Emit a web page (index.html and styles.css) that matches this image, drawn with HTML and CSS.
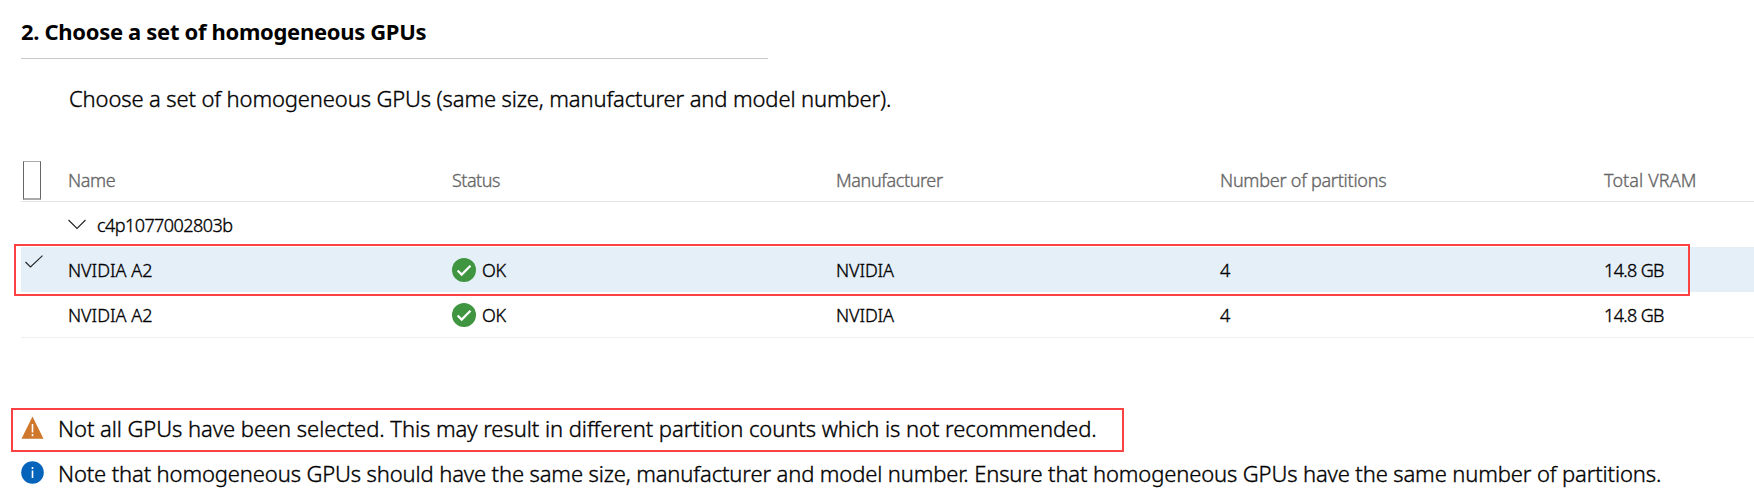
FILE: index.html
```html
<!DOCTYPE html>
<html lang="en">
<head>
<meta charset="utf-8">
<title>Choose GPUs</title>
<link rel="stylesheet" href="styles.css">
</head>
<body>
<main class="step">
  <h2 class="step-title"><span class="t-title">2. Choose a set of homogeneous GPUs</span></h2>
  <p class="intro"><span class="t-intro">Choose a set of homogeneous GPUs (same size, manufacturer and model number).</span></p>

  <section class="grid">
    <div class="row head">
      <div class="select"><span class="checkbox"></span></div>
      <div class="cell"><span class="t-name">Name</span></div>
      <div class="cell"><span class="t-status">Status</span></div>
      <div class="cell"><span class="t-manu">Manufacturer</span></div>
      <div class="cell"><span class="t-num">Number of partitions</span></div>
      <div class="cell"><span class="t-vram">Total VRAM</span></div>
    </div>
    <div class="row group">
      <svg class="chevron" viewBox="0 0 18 11" width="18" height="11"><path d="M.5 1 9 9.5 17.5 1" fill="none" stroke="#222" stroke-width="1.1"/></svg>
      <span class="t-host">c4p1077002803b</span>
    </div>
    <div class="row selected">
      <div class="select"><svg class="tick" viewBox="0 0 18 13" width="18" height="13"><path d="M.5 7 5.5 12 17.5.6" fill="none" stroke="#222" stroke-width="1.1"/></svg></div>
      <div class="cell"><span class="t-gpu">NVIDIA A2</span></div>
      <div class="cell"><svg class="ok" viewBox="0 0 24 24" width="24" height="24"><circle cx="12" cy="12" r="12" fill="#3f9540"/><path d="M5.6 12.5 9.7 16.6 18.5 7.7" fill="none" stroke="#fff" stroke-width="2.2"/></svg><span class="t-ok">OK</span></div>
      <div class="cell"><span class="t-vendor">NVIDIA</span></div>
      <div class="cell"><span class="t-count">4</span></div>
      <div class="cell"><span class="t-size">14.8 GB</span></div>
      <span class="callout"></span>
    </div>
    <div class="row last">
      <div class="select"></div>
      <div class="cell"><span class="t-gpu">NVIDIA A2</span></div>
      <div class="cell"><svg class="ok" viewBox="0 0 24 24" width="24" height="24"><circle cx="12" cy="12" r="12" fill="#3f9540"/><path d="M5.6 12.5 9.7 16.6 18.5 7.7" fill="none" stroke="#fff" stroke-width="2.2"/></svg><span class="t-ok">OK</span></div>
      <div class="cell"><span class="t-vendor">NVIDIA</span></div>
      <div class="cell"><span class="t-count">4</span></div>
      <div class="cell"><span class="t-size">14.8 GB</span></div>
    </div>
  </section>

  <section class="messages">
    <div class="message warning">
      <svg class="msg-icon" viewBox="0 0 23 23" width="23" height="23"><path d="M11.5.5 22.5 22.8H.5Z" fill="#cf772b"/><path d="M11.5 8v8.5M11.5 18v2.2" stroke="#fff" stroke-width="1.6"/></svg>
      <span class="t-warn">Not all GPUs have been selected. This may result in different partition counts which is not recommended.</span>
    </div>
    <div class="message">
      <svg class="msg-icon" viewBox="0 0 23 23" width="23" height="23"><circle cx="11.5" cy="11.5" r="11.3" fill="#0664bb"/><path d="M11.5 6v2M11.5 9.5v7.5" stroke="#fff" stroke-width="1.6"/></svg>
      <span class="t-note">Note that homogeneous GPUs should have the same size, manufacturer and model number. Ensure that homogeneous GPUs have the same number of partitions.</span>
    </div>
  </section>
</main>
</body>
</html>
```
FILE: styles.css
```css
* { box-sizing: border-box; }
body {
  margin: 0;
  background: #fff;
  color: #000;
  font-family: "Noto Sans", "Open Sans", sans-serif;
  font-weight: 300;
  -webkit-text-stroke: .35px currentColor;
  overflow: hidden;
}
.step { padding: 6px 0 0 21px; white-space: nowrap; }
.step-title {
  width: 747px;
  height: 53px;
  margin: 0;
  border-bottom: 1px solid #c8c8c8;
  font-size: 22px;
  font-weight: 700;
  line-height: 51px;
  -webkit-text-stroke: 0;
}
.intro {
  margin: 0;
  padding: 19px 0 0 48px;
  font-size: 22px;
  line-height: 41px;
}
.grid { margin-top: 42px; font-size: 18px; }
.row {
  display: grid;
  grid-template-columns: 47px repeat(4, 384px) 1fr;
  height: 45px;
  line-height: 43px;
  position: relative;
}
.cell { display: flex; align-items: flex-start; }
.cell span { padding-top: 2px; }
.t-host { padding-top: 2px; }
.head {
  height: 41px;
  line-height: 39px;
  border-bottom: 1px solid #e3e3e3;
  color: #666;
}
.head .cell span { padding-top: 0; }
.checkbox {
  display: block;
  width: 18px;
  height: 39px;
  margin-left: 2px;
  border: 1px solid #666;
  border-top-color: #aaa;
  border-bottom: 2px solid #aaa;
}
.group { display: flex; align-items: center; gap: 11px; padding-left: 47px; }
.chevron { margin-top: -1px; }
.selected { background: #e5eff8; }
.tick { display: block; margin: 8px 0 0 4px; }
.ok { margin: 11px 6px 0 0; }
.last { height: 46px; border-bottom: 1px solid #efefef; }
.callout {
  position: absolute;
  left: -7px;
  top: -3px;
  width: 1676px;
  height: 52px;
  border: 2px solid #fb4242;
}
.messages { margin: 70px 0 0 -10px; font-size: 22px; }
.message {
  display: flex;
  align-items: center;
  gap: 14px;
  height: 45px;
  padding-left: 10px;
}
.message span { padding-bottom: 4px; }
.warning {
  width: 1113px;
  height: 44px;
  padding-left: 8px;
  border: 2px solid #fb4242;
}
.msg-icon { flex: none; margin-top: -5px; }

/* tracking */
.t-title { letter-spacing: -.32px; }
.t-intro { letter-spacing: -.13px; }
.t-name { letter-spacing: -.4px; }
.t-status { letter-spacing: -.5px; }
.t-manu { letter-spacing: -.38px; }
.t-num { letter-spacing: -.24px; }
.t-vram { letter-spacing: .1px; }
.t-host { letter-spacing: -.56px; }
.t-ok { letter-spacing: -.4px; }
.t-vendor { letter-spacing: -.1px; }
.t-size { letter-spacing: -.65px; }
.t-warn { letter-spacing: -.06px; }
.t-note { letter-spacing: -.134px; }
```
